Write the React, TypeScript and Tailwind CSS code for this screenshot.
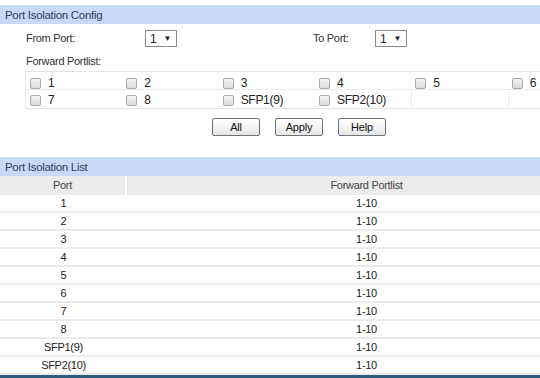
import React from "react";

const ports = ["1", "2", "3", "4", "5", "6", "7", "8", "SFP1(9)", "SFP2(10)"];

function Select() {
  return (
    <div className="flex h-[17px] w-[32px] items-center justify-between border border-[#8a8a8a] bg-white pl-[4px] pr-[5px] text-[12px] text-[#222]">
      <span>1</span>
      <span className="text-[8px]">▼</span>
    </div>
  );
}

function Check() {
  return (
    <span className="inline-block h-[11px] w-[11px] shrink-0 rounded-[2px] border border-[#a9a9a9] bg-gradient-to-b from-[#f4f4f4] to-[#dadada]" />
  );
}

function Btn({ label }: { label: string }) {
  return (
    <button className="h-[18px] w-[48px] rounded-[2px] border border-[#6f7378] bg-gradient-to-b from-white to-[#e6e6e6] text-[11px] leading-none tracking-[-0.2px] text-[#111]">
      {label}
    </button>
  );
}

export default function App() {
  const rows = [ports.slice(0, 6), ports.slice(6)];
  return (
    <div className="h-[378px] w-[540px] overflow-hidden bg-white font-['Liberation_Sans',Arial,sans-serif] text-[11px] tracking-[-0.3px] text-[#333]">
      <div className="w-[606px] pt-[5px]">
        <div className="h-[19px] bg-[#c6daf7] pl-[5px] text-[11.5px] leading-[20px] tracking-[-0.3px] text-[#2f3d5c]">Port Isolation Config</div>

        <div className="pl-[26px]">
          <div className="mt-[6px] flex h-[17px] items-center">
            <span className="w-[119px]">From Port:</span>
            <Select />
            <span className="ml-[136px] w-[62px]">To Port:</span>
            <Select />
          </div>
          <div className="mt-[7px] leading-[14px]">Forward Portlist:</div>
        </div>

        <div className="ml-[25px] mt-[3px] w-[580px] border border-[#e4e4e4]">
          {rows.map((r, i) => (
            <div key={i} className={`grid h-[18px] grid-cols-6 ${i === 0 ? "border-b border-[#ececec] pt-[2px]" : "pt-[1px]"}`}>
              {Array.from({ length: 6 }).map((_, j) => (
                <div key={j} className={`flex items-center pl-[4px] ${i === 1 && j > 3 ? "border-l border-[#ececec]" : ""}`}>
                  {r[j] && (
                    <>
                      <Check />
                      <span className="ml-[7px] text-[12px] tracking-[-0.3px] text-[#222]">{r[j]}</span>
                    </>
                  )}
                </div>
              ))}
            </div>
          ))}
        </div>

        <div className="mt-[9px] flex gap-[15px] pl-[212px]">
          <Btn label="All" />
          <Btn label="Apply" />
          <Btn label="Help" />
        </div>

        <div className="mt-[21px] h-[19px] bg-[#c6daf7] pl-[5px] text-[11.5px] leading-[20px] tracking-[-0.3px] text-[#2f3d5c]">Port Isolation List</div>

        <div className="grid h-[19px] grid-cols-[127px_1fr] bg-[#ececec] text-[#444]">
          <div className="border-r-2 border-white text-center leading-[19px]">Port</div>
          <div className="text-center leading-[19px]">Forward Portlist</div>
        </div>
        {ports.map((p) => (
          <div key={p} className="grid h-[18px] grid-cols-[127px_1fr] border-b-2 border-[#ebebeb] text-[#222]">
            <div className="text-center leading-[16px]">{p}</div>
            <div className="text-center leading-[16px]">1-10</div>
          </div>
        ))}
        <div className="h-[3px] bg-[#2f5a78]" />
      </div>
    </div>
  );
}
